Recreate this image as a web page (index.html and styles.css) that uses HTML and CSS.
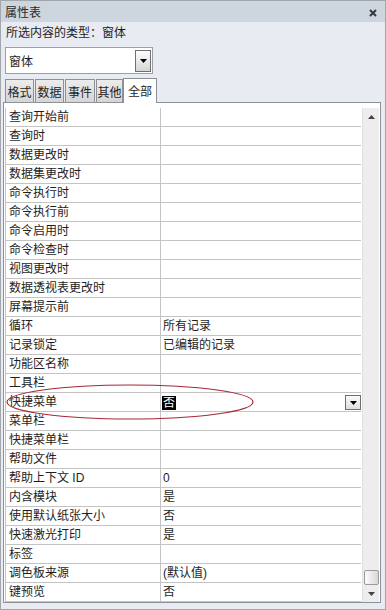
FILE: index.html
```html
<!DOCTYPE html>
<html>
<head>
	<meta charset="utf-8">
	<title>属性表</title>
	<link rel="stylesheet" href="styles.css">
</head>
<body>
<div class="window">
	<div class="titlebar">
		<span>属性表</span>
		<svg class="close" width="8" height="8" viewBox="0 0 8 8">
			<path d="M1 1L7 7M7 1L1 7" stroke="#3a3a3a" stroke-width="2"/>
		</svg>
	</div>
	<div class="subtitle">所选内容的类型：窗体</div>
	<div class="combo">
		<span>窗体</span>
		<span class="combo-btn"><svg width="7" height="4" viewBox="0 0 7 4"><path d="M0 0H7L3.5 4Z" fill="#000"/></svg></span>
	</div>
	<div class="tabs">
		<span class="tab w29">格式</span>
		<span class="tab w29">数据</span>
		<span class="tab w30">事件</span>
		<span class="tab w27">其他</span>
		<span class="tab active">全部</span>
	</div>
	<div class="sheet">
		<div class="grid">
			<div class="row"><div class="name">查询开始前</div><div class="value"></div></div>
			<div class="row"><div class="name">查询时</div><div class="value"></div></div>
			<div class="row"><div class="name">数据更改时</div><div class="value"></div></div>
			<div class="row"><div class="name">数据集更改时</div><div class="value"></div></div>
			<div class="row"><div class="name">命令执行时</div><div class="value"></div></div>
			<div class="row"><div class="name">命令执行前</div><div class="value"></div></div>
			<div class="row"><div class="name">命令启用时</div><div class="value"></div></div>
			<div class="row"><div class="name">命令检查时</div><div class="value"></div></div>
			<div class="row"><div class="name">视图更改时</div><div class="value"></div></div>
			<div class="row"><div class="name">数据透视表更改时</div><div class="value"></div></div>
			<div class="row"><div class="name">屏幕提示前</div><div class="value"></div></div>
			<div class="row"><div class="name">循环</div><div class="value">所有记录</div></div>
			<div class="row"><div class="name">记录锁定</div><div class="value">已编辑的记录</div></div>
			<div class="row"><div class="name">功能区名称</div><div class="value"></div></div>
			<div class="row"><div class="name">工具栏</div><div class="value"></div></div>
			<div class="row"><div class="name">快捷菜单</div><div class="value"><span class="sel">否</span><span class="drop"><svg width="7" height="4" viewBox="0 0 7 4"><path d="M0 0H7L3.5 4Z" fill="#000"/></svg></span></div></div>
			<div class="row"><div class="name">菜单栏</div><div class="value"></div></div>
			<div class="row"><div class="name">快捷菜单栏</div><div class="value"></div></div>
			<div class="row"><div class="name">帮助文件</div><div class="value"></div></div>
			<div class="row"><div class="name">帮助上下文 ID</div><div class="value">0</div></div>
			<div class="row"><div class="name">内含模块</div><div class="value">是</div></div>
			<div class="row"><div class="name">使用默认纸张大小</div><div class="value">否</div></div>
			<div class="row"><div class="name">快速激光打印</div><div class="value">是</div></div>
			<div class="row"><div class="name">标签</div><div class="value"></div></div>
			<div class="row"><div class="name">调色板来源</div><div class="value">(默认值)</div></div>
			<div class="row"><div class="name">键预览</div><div class="value">否</div></div>
		</div>
		<div class="scrollbar">
			<div class="arrow"><svg width="7" height="4" viewBox="0 0 7 4"><path d="M0 4H7L3.5 0Z" fill="#444"/></svg></div>
			<div class="track"><div class="thumb"></div></div>
			<div class="arrow"><svg width="7" height="4" viewBox="0 0 7 4"><path d="M0 0H7L3.5 4Z" fill="#444"/></svg></div>
		</div>
	</div>
	<!-- red mark round the selected row -->
	<svg class="mark" width="252" height="40" viewBox="0 0 252 40">
		<ellipse cx="125" cy="19" rx="123" ry="17" fill="none" stroke="#a8283a" stroke-width="1.2"/>
	</svg>
</div>
</body>
</html>
```

FILE: styles.css
```css
body {
	margin: 0;
}
.window {
	position: relative;
	width: 386px;
	height: 610px;
	box-sizing: border-box;
	border: 1px solid #a2a7ae;
	background: #e8ebf1;
	font: 12px "Liberation Sans", "Noto Sans CJK SC", sans-serif;
	color: #1e1e1e;
}
.titlebar {
	height: 21px;
	box-sizing: border-box;
	padding: 2px 8px 0 4px;
	display: flex;
	align-items: center;
	justify-content: space-between;
	background: #cdd5df;
	color: #2a2a2a;
	line-height: 16px;
}
.subtitle {
	padding: 3px 0 0 5px;
	height: 15px;
	line-height: 16px;
}
.combo {
	margin: 7px 0 0 4px;
	width: 148px;
	height: 27px;
	box-sizing: border-box;
	border: 1px solid #9c9fa3;
	background: #fff;
	display: flex;
	align-items: center;
	padding-left: 3px;
}
.combo-btn {
	margin: 0 1px 0 auto;
	width: 16px;
	height: 22px;
	box-sizing: border-box;
	border: 1px solid #707070;
	background: linear-gradient(#fdfdfd, #d6d6d6);
	display: flex;
	align-items: center;
	justify-content: center;
}
.tabs {
	margin-top: 4px;
	height: 24px;
	padding-left: 4px;
	display: flex;
	align-items: flex-end;
	gap: 1px;
}
.tab {
	height: 23px;
	box-sizing: border-box;
	border: 1px solid #8d9097;
	border-bottom: none;
	background: linear-gradient(#ececec, #d5d5d5);
	display: flex;
	align-items: center;
	justify-content: center;
}
.w29 { width: 29px; }
.w30 { width: 30px; }
.w27 { width: 27px; }
.tab.active {
	/* the open tab sits over the sheet's top border */
	position: relative;
	z-index: 1;
	width: 34px;
	height: 25px;
	margin: 0 0 -1px -1px;
	background: #fff;
	padding-bottom: 2px;
}
.sheet {
	margin-left: 2px;
	width: 378px;
	height: 501px;
	box-sizing: border-box;
	border: 1px solid #8e9196;
	background: #fff;
	padding: 5px 1px 0 1px;
	display: flex;
}
.grid {
	flex: 1;
	border-left: 1px solid #c4c4c4;
	margin-right: 1px;
}
.row {
	height: 19px;
	box-sizing: border-box;
	border-bottom: 1px solid #c4c4c4;
	display: flex;
	line-height: 17px;
}
.name {
	width: 155px;
	box-sizing: border-box;
	border-right: 1px solid #c4c4c4;
	padding: 1px 0 0 3px;
	white-space: nowrap;
}
.value {
	flex: 1;
	padding: 1px 0 0 2px;
	display: flex;
	align-items: center;
}
.sel {
	margin-left: -1px;
	padding: 0 1px;
	line-height: 14px;
	background: #000;
	color: #fff;
}
.drop {
	margin: 0 0 0 auto;
	width: 16px;
	height: 15px;
	box-sizing: border-box;
	border: 1px solid #6e6e6e;
	background: linear-gradient(#fafafa, #dedede);
	display: flex;
	align-items: center;
	justify-content: center;
}
.scrollbar {
	width: 17px;
	display: flex;
	flex-direction: column;
	background: #ededed;
	border-left: 1px solid #e0e0e0;
	box-sizing: border-box;
}
.arrow {
	height: 17px;
	display: flex;
	align-items: center;
	justify-content: center;
}
.track {
	flex: 1;
	display: flex;
	flex-direction: column;
	justify-content: flex-end;
	align-items: center;
}
.thumb {
	width: 15px;
	height: 15px;
	box-sizing: border-box;
	border: 1px solid #9a9a9a;
	border-radius: 2px;
	background: linear-gradient(90deg, #fbfbfb, #d8d8d8);
}
.mark {
	position: absolute;
	left: 4px;
	top: 382px;
}
```
